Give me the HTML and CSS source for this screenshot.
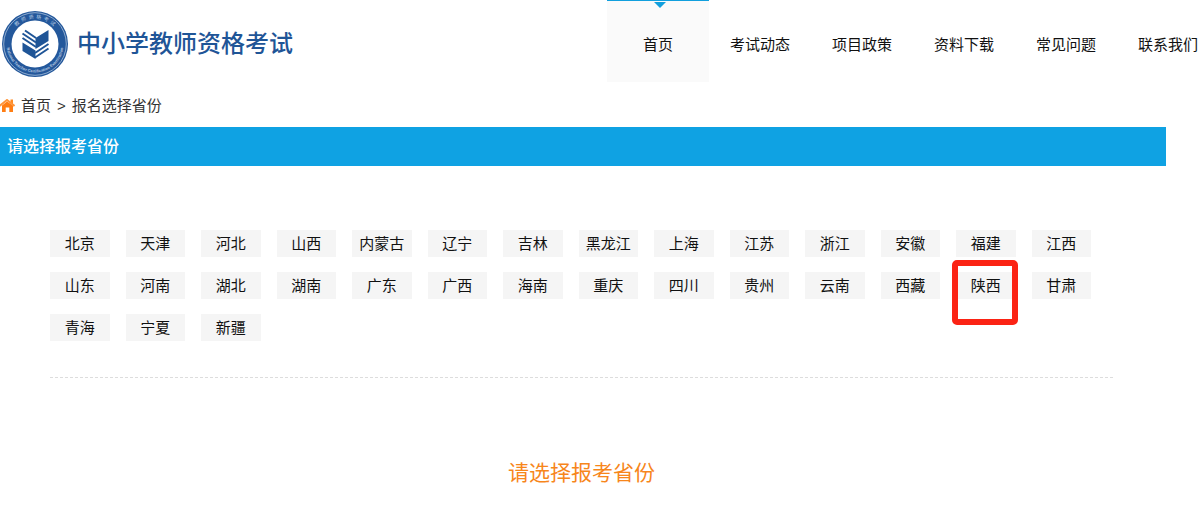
FILE: index.html
```html
<!DOCTYPE html>
<html lang="zh-CN">
<head>
<meta charset="utf-8">
<title>中小学教师资格考试</title>
<link rel="stylesheet" href="styles.css">
</head>
<body>
<header class="header">
  <a class="brand" href="#">
    <svg class="brand-logo" viewBox="0 0 66 66" aria-hidden="true">
      <defs>
        <path id="arc-top" d="M7.500 33a25.500 25.500 0 0 1 51 0"/>
        <path id="arc-bottom" d="M4.500 33a28.500 28.500 0 0 0 57 0"/>
      </defs>
      <circle cx="33" cy="33" r="33" fill="#24589b"/>
      <circle cx="33" cy="33" r="31.300" fill="none" stroke="#a9c0dc" stroke-width=".8"/>
      <circle cx="33" cy="33" r="23.500" fill="#fff"/>
      <text class="seal-cn"><textPath href="#arc-top" startOffset="50%" text-anchor="middle">教  师  资  格  考  试</textPath></text>
      <text class="seal-en"><textPath href="#arc-bottom" startOffset="50%" text-anchor="middle">National Teacher Certification Examination</textPath></text>
      <g fill="#1f5597">
        <path d="M33.500 27 46.500 19V30L33.500 38z"/>
        <path d="M20.500 31.500 33.500 39.500V48L20.500 40z"/>
      </g>
      <g fill="none" stroke="#1f5597" stroke-width="2">
        <path d="M23 19.500 34 27M20.500 22.500 34 31.500M20.500 27 34 36"/>
        <path d="M33 42 46.500 33M33 46.500 46.500 37.500"/>
      </g>
    </svg>
    <span class="brand-name">中小学教师资格考试</span>
  </a>
  <nav class="nav">
    <a class="nav-link nav-link-active" href="#">首页</a>
    <a class="nav-link" href="#">考试动态</a>
    <a class="nav-link" href="#">项目政策</a>
    <a class="nav-link" href="#">资料下载</a>
    <a class="nav-link" href="#">常见问题</a>
    <a class="nav-link" href="#">联系我们</a>
  </nav>
</header>
<main class="main">
  <div class="crumbs">
    <svg class="home-icon" viewBox="0 0 15 15" aria-hidden="true">
      <path d="M2 6.500 7 2.500l6 4V13H9.300V8.500H5.700V13H2z" fill="#ff7e14"/>
      <path d="M-.5 7 7 1l7.500 6" fill="none" stroke="#ff963c" stroke-width="2"/>
      <path d="M10.500 .5H13V5l-2.500-2z" fill="#ff8a22"/>
    </svg>
    <a class="crumb" href="#">首页</a>
    <span>&gt;</span>
    <a class="crumb" href="#">报名选择省份</a>
  </div>
  <h1 class="banner">请选择报考省份</h1>
  <section class="panel">
    <ul class="provinces">
      <li><a class="province" href="#">北京</a></li>
      <li><a class="province" href="#">天津</a></li>
      <li><a class="province" href="#">河北</a></li>
      <li><a class="province" href="#">山西</a></li>
      <li><a class="province" href="#">内蒙古</a></li>
      <li><a class="province" href="#">辽宁</a></li>
      <li><a class="province" href="#">吉林</a></li>
      <li><a class="province" href="#">黑龙江</a></li>
      <li><a class="province" href="#">上海</a></li>
      <li><a class="province" href="#">江苏</a></li>
      <li><a class="province" href="#">浙江</a></li>
      <li><a class="province" href="#">安徽</a></li>
      <li><a class="province" href="#">福建</a></li>
      <li><a class="province" href="#">江西</a></li>
      <li><a class="province" href="#">山东</a></li>
      <li><a class="province" href="#">河南</a></li>
      <li><a class="province" href="#">湖北</a></li>
      <li><a class="province" href="#">湖南</a></li>
      <li><a class="province" href="#">广东</a></li>
      <li><a class="province" href="#">广西</a></li>
      <li><a class="province" href="#">海南</a></li>
      <li><a class="province" href="#">重庆</a></li>
      <li><a class="province" href="#">四川</a></li>
      <li><a class="province" href="#">贵州</a></li>
      <li><a class="province" href="#">云南</a></li>
      <li><a class="province" href="#">西藏</a></li>
      <li><a class="province province-marked" href="#">陕西</a></li>
      <li><a class="province" href="#">甘肃</a></li>
      <li><a class="province" href="#">青海</a></li>
      <li><a class="province" href="#">宁夏</a></li>
      <li><a class="province" href="#">新疆</a></li>
    </ul>
    <p class="prompt">请选择报考省份</p>
  </section>
</main>
</body>
</html>
```

FILE: styles.css
```css
*,
*::before,
*::after {
  box-sizing: border-box;
}

body {
  margin: 0;
  overflow-x: hidden;
  background: #fff;
  color: #111;
  font: 15px/20px "Liberation Sans", "Noto Sans CJK SC", sans-serif;
}

a {
  color: inherit;
  text-decoration: none;
}

.header {
  display: flex;
  justify-content: space-between;
  height: 82px;
}

.brand {
  display: flex;
  align-items: center;
  gap: 9px;
  padding: 5px 0 0 2px;
}

.brand-logo {
  width: 66px;
  height: 66px;
}

.seal-cn {
  fill: #b9cde4;
  font: 5px "Noto Sans CJK SC", sans-serif;
  white-space: pre;
}

.seal-en {
  fill: #b4c8e0;
  font: bold 4px "Liberation Sans", sans-serif;
}

.brand-name {
  color: #1f5597;
  font-size: 24px;
  font-weight: 500;
  line-height: 32px;
}

.nav {
  display: flex;
  flex: none;
  margin-right: -19px;
}

.nav-link {
  position: relative;
  width: 102px;
  padding-top: 34px;
  border-top: 1px solid transparent;
  text-align: center;
}

.nav-link-active {
  border-top-color: #119fdd;
  background: #fafafa;
}

.nav-link-active::before {
  content: "";
  position: absolute;
  top: 1px;
  left: 47px;
  border: 6px solid transparent;
  border-top-color: #119fdd;
  border-bottom: 0;
}

.main {
  padding-right: 34px;
}

.crumbs {
  display: flex;
  align-items: center;
  gap: 6px;
  padding: 14px 0 11px;
  color: #333;
}

.home-icon {
  width: 15px;
  height: 15px;
}

.banner {
  margin: 0;
  padding: 0 7px;
  background: #0fa2e3;
  color: #fff;
  font-size: 16px;
  font-weight: 500;
  line-height: 39px;
}

.panel {
  padding: 64px 53px 0 50px;
}

.provinces {
  display: grid;
  grid-template-columns: repeat(14, 1fr);
  gap: 15px 16px;
  margin: 0;
  padding: 0 22px 36px 0;
  border-bottom: 1px dashed #ddd;
  list-style: none;
}

.province {
  display: block;
  position: relative;
  background: #f5f5f5;
  line-height: 27px;
  text-align: center;
  white-space: nowrap;
}

.province-marked::after {
  content: "";
  position: absolute;
  top: -12px;
  left: -4px;
  width: 66px;
  height: 65px;
  border: 6px solid #fb2314;
  border-radius: 5px;
}

.prompt {
  margin: 0;
  padding: 80px 0 20px;
  color: #f7861b;
  font-size: 21px;
  line-height: 30px;
  text-align: center;
}
```
